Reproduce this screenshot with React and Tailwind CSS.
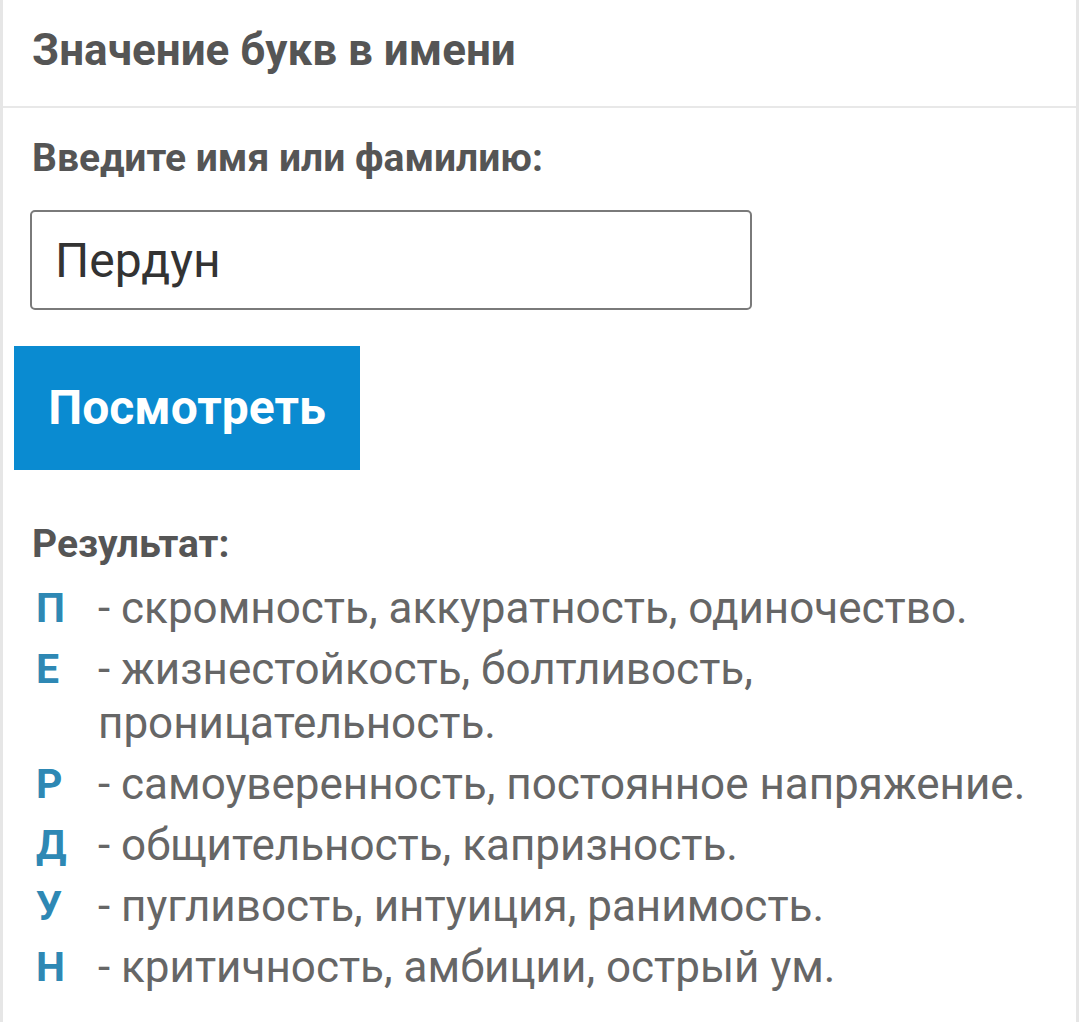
import { useState } from "react";

const letters = [
  { ch: "П", text: "- скромность, аккуратность, одиночество." },
  { ch: "Е", text: "- жизнестойкость, болтливость, проницательность." },
  { ch: "Р", text: "- самоуверенность, постоянное напряжение." },
  { ch: "Д", text: "- общительность, капризность." },
  { ch: "У", text: "- пугливость, интуиция, ранимость." },
  { ch: "Н", text: "- критичность, амбиции, острый ум." },
];

export default function App() {
  const [name, setName] = useState("Пердун");

  return (
    <div
      className="min-h-[1022px] bg-white border-x-[3px] border-[#e6e6e6]"
      style={{ fontFamily: "Roboto, 'Noto Sans', sans-serif" }}
    >
      {/* Header */}
      <div className="h-[108px] border-b-2 border-[#e8e8e8] pl-[29px] pt-[22px]">
        <h1 className="text-[44px] leading-[56px] font-bold text-[#555]">
          Значение букв в имени
        </h1>
      </div>

      {/* Form */}
      <div className="pl-[29px] pr-[20px] pt-[28px]">
        <label className="block text-[39px] leading-[44px] font-bold text-[#555]">
          Введите имя или фамилию:
        </label>
        <input
          type="text"
          value={name}
          onChange={(e) => setName(e.target.value)}
          className="mt-[30px] -ml-[2px] block w-[722px] h-[100px] px-[23px] border-2 border-[#7a7a7a] rounded-[5px] text-[48px] text-[#333] outline-none"
        />
        <button className="mt-[36px] -ml-[18px] w-[346px] h-[124px] bg-[#0a8bd1] text-white text-[48px] font-bold">
          Посмотреть
        </button>

        {/* Result */}
        <div className="mt-[52px] text-[39px] leading-[44px] font-bold text-[#555]">
          Результат:
        </div>
        <div className="mt-[15px] flex flex-col gap-[7px]">
          {letters.map((l) => (
            <div key={l.ch} className="flex">
              <span className="w-[66px] shrink-0 pl-[4px] text-[41px] leading-[54px] font-bold text-[#2e88b4]">
                {l.ch}
              </span>
              <span className="text-[44px] leading-[54px] text-[#666]">
                {l.text}
              </span>
            </div>
          ))}
        </div>
      </div>
    </div>
  );
}
